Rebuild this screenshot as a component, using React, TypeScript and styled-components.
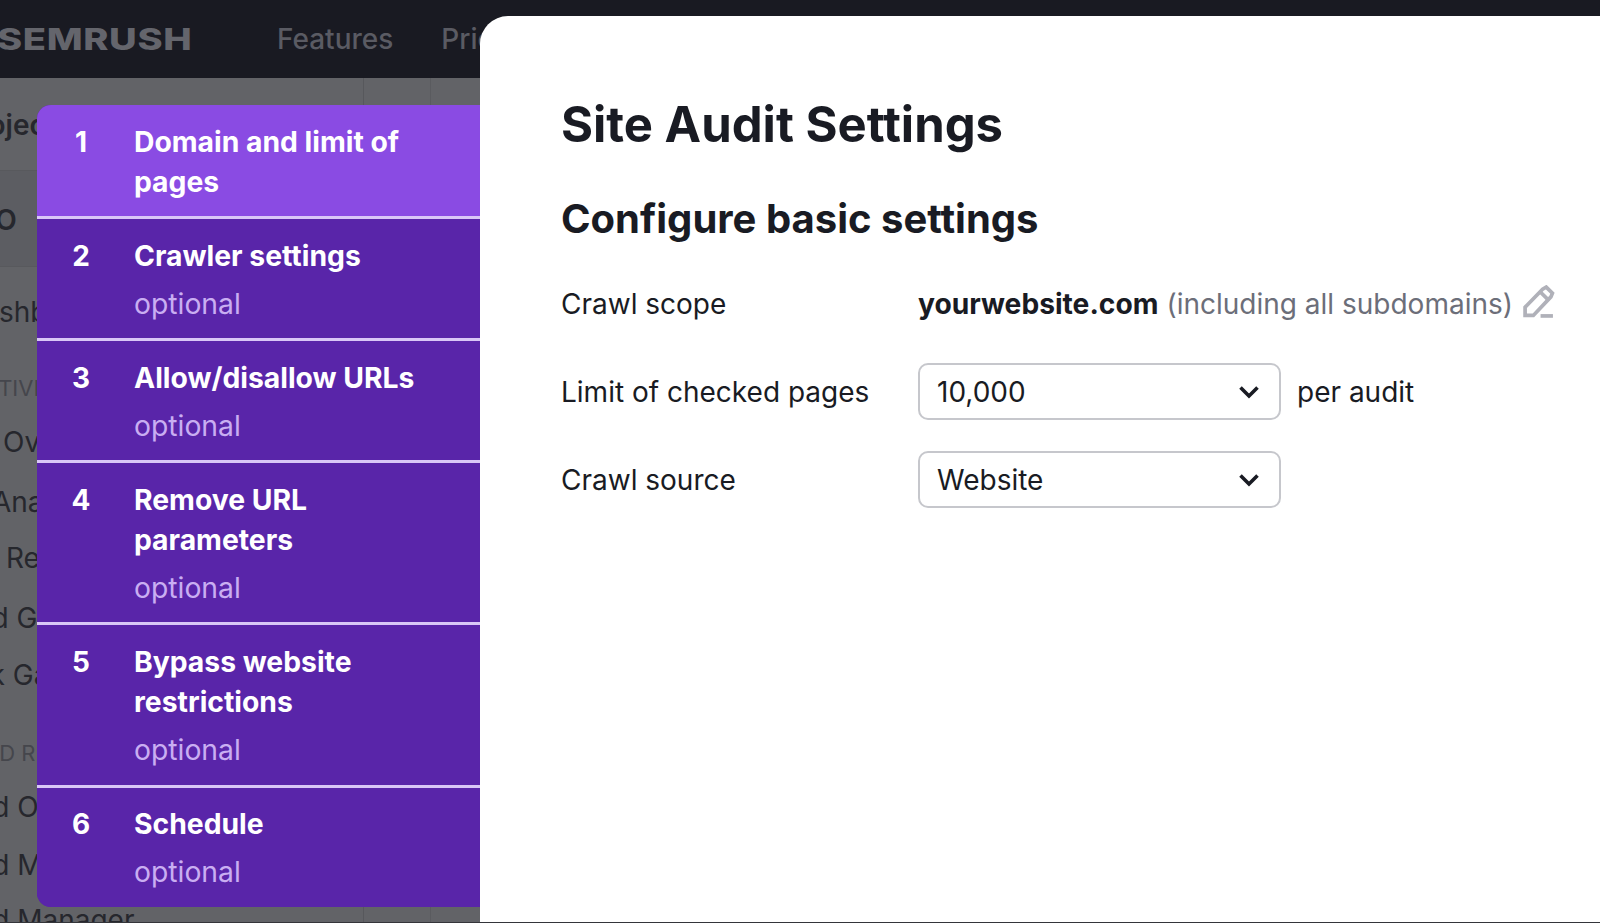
import React from 'react';
import styled, { createGlobalStyle } from 'styled-components';

const GlobalStyle = createGlobalStyle`
    html, body {
        margin: 0;
        padding: 0;
        height: 100%;
        overflow: hidden;
        font-family: Inter, "Liberation Sans", sans-serif;
    }
`;

const Page = styled.div`
    position: relative;
    width: 1600px;
    height: 923px;
    box-sizing: border-box;
    overflow: hidden;
    background: #626367;
    border-bottom: 1px solid #34353a;
    display: flex;
    flex-direction: column;
`;

const TopBar = styled.header`
    height: 78px;
    flex: none;
    background: #191a22;
    display: flex;
    align-items: center;
    gap: 84px;
`;

const Logo = styled.div`
    margin-left: -3px;
    width: 196px;
    font-size: 30px;
    font-weight: 800;
    color: #64656c;
    letter-spacing: 0.5px;
    transform: scaleX(1.27);
    transform-origin: left center;
`;

const NavLinks = styled.nav`
    display: flex;
    gap: 48px;
    font-size: 28px;
    font-weight: 500;
    color: #5a5b63;
`;

const BackBody = styled.div`
    flex: 1;
    display: flex;
    min-height: 0;
`;

const BackSidebar = styled.aside`
    width: 363px;
    flex: none;
    border-right: 1px solid #57585c;
    display: flex;
    flex-direction: column;
    white-space: nowrap;
    overflow: hidden;
`;

const BackColumn = styled.div`
    width: 66px;
    flex: none;
    border-right: 1px solid #5a5b5f;
`;

const BackRow = styled.div<{ $top: number; $indent: number; $kind?: string }>`
    flex: none;
    margin-top: ${({ $top }) => $top}px;
    height: 34px;
    line-height: 34px;
    text-indent: ${({ $indent }) => $indent}px;
    color: ${({ $kind }) => ($kind === 'label' ? '#45464c' : '#26272d')};
    font-size: ${({ $kind }) => ($kind === 'label' ? '22px' : '28px')};
    font-weight: ${({ $kind }) => ($kind === 'strong' ? 600 : 400)};
`;

const BackBand = styled.div<{ $top: number; $indent: number }>`
    flex: none;
    margin-top: ${({ $top }) => $top}px;
    height: 97px;
    box-sizing: border-box;
    padding-top: 3px;
    line-height: 92px;
    background: #5c5d62;
    border-top: 1px solid #58595d;
    border-bottom: 1px solid #58595d;
    text-indent: ${({ $indent }) => $indent}px;
    color: #26272d;
    font-size: 28px;
    font-weight: 600;
`;

const Modal = styled.section`
    position: absolute;
    left: 480px;
    top: 16px;
    right: 0;
    bottom: 0;
    background: #fff;
    border-top-left-radius: 28px;
    padding: 0 0 0 81px;
    color: #191b23;
`;

const Steps = styled.ol`
    position: absolute;
    left: 37px;
    top: 105px;
    width: 443px;
    margin: 0;
    padding: 0;
    list-style: none;
    background: #5925a9;
    border-radius: 14px 0 0 14px;
    overflow: hidden;
`;

const Step = styled.li<{ $active?: boolean; $height: number }>`
    display: flex;
    height: ${({ $height }) => $height}px;
    box-sizing: border-box;
    padding-top: 17px;
    background: ${({ $active }) => ($active ? '#8a4be3' : '#5925a9')};
    border-bottom: 3px solid #d9c7f7;
    color: #fff;

    &:last-child {
        border-bottom: none;
        padding-top: 16px;
    }
`;

const StepNumber = styled.div`
    width: 97px;
    flex: none;
    text-align: center;
    padding-right: 9px;
    box-sizing: border-box;
    font-size: 28px;
    font-weight: 700;
    line-height: 40px;
`;

const StepBody = styled.div`
    flex: 1;
`;

const StepTitle = styled.div`
    font-size: 28.3px;
    font-weight: 700;
    line-height: 40px;
    max-width: 300px;
`;

const StepNote = styled.div`
    font-size: 28.3px;
    line-height: 40px;
    margin-top: 8px;
    color: #c9aef2;
`;

const Title = styled.h1`
    margin: 81px 0 0;
    font-size: 49px;
    line-height: 56px;
    font-weight: 700;
`;

const Subtitle = styled.h2`
    margin: 42px 0 0;
    font-size: 40px;
    line-height: 48px;
    font-weight: 700;
`;

const Form = styled.div`
    margin-top: 32px;
    display: flex;
    flex-direction: column;
    gap: 31px;
`;

const Row = styled.div`
    display: flex;
    align-items: center;
    min-height: 57px;
    font-size: 28px;
`;

const Label = styled.div`
    width: 357px;
    flex: none;
`;

const Domain = styled.strong`
    font-size: 28.2px;
    font-weight: 700;
`;

const Muted = styled.span`
    margin-left: 8px;
    color: #6c6e79;
`;

const EditIcon = styled.svg`
    width: 33px;
    height: 33px;
    margin-left: 9px;
    margin-bottom: 4px;
    color: #b0b1b9;
`;

const Select = styled.div`
    width: 363px;
    height: 57px;
    box-sizing: border-box;
    border: 2px solid #c6c7cc;
    border-radius: 10px;
    padding: 0 18px 0 17px;
    display: flex;
    align-items: center;
    justify-content: space-between;
`;

const Chevron = styled.svg`
    width: 24px;
    height: 24px;
`;

const Suffix = styled.div`
    margin-left: 16px;
`;

const ChevronDown = () => (
    <Chevron viewBox="0 0 24 24" fill="none" stroke="#191b23" strokeWidth="3.6">
        <path d="M3.500 7.500l8.500 8.500 8.500-8.500" />
    </Chevron>
);

const steps = [
    { title: 'Domain and limit of pages', height: 114, active: true },
    { title: 'Crawler settings', note: true, height: 122 },
    { title: 'Allow/disallow URLs', note: true, height: 122 },
    { title: 'Remove URL parameters', note: true, height: 162 },
    { title: 'Bypass website restrictions', note: true, height: 163 },
    { title: 'Schedule', note: true, height: 119 },
];

const backRows = [
    { text: 'Dashboard', top: 28, indent: -37 },
    { text: 'COMPETITIVE', top: 42, indent: -102, kind: 'label' },
    { text: 'Market Overview', top: 20, indent: -97 },
    { text: 'Analytics', top: 26, indent: -8 },
    { text: 'Report', top: 22, indent: 6 },
    { text: 'Keyword Gap', top: 26, indent: -107 },
    { text: 'Backlink Gap', top: 23, indent: -106 },
    { text: 'BRAND RESEARCH', top: 44, indent: -61, kind: 'label' },
    { text: 'Brand Overview', top: 20, indent: -69 },
    { text: 'Brand Monitoring', top: 24, indent: -69 },
    { text: 'Brand Manager', top: 21, indent: -69 },
];

export default function App() {
    return (
        <Page>
            <GlobalStyle />
            <TopBar>
                <Logo>SEMRUSH</Logo>
                <NavLinks>
                    <span>Features</span>
                    <span>Pricing</span>
                </NavLinks>
            </TopBar>
            <BackBody>
                <BackSidebar>
                    <BackRow $top={30} $indent={-40} $kind="strong">Projects</BackRow>
                    <BackBand $top={28} $indent={-40}>SEO</BackBand>
                    {backRows.map((row) => (
                        <BackRow key={row.text} $top={row.top} $indent={row.indent} $kind={row.kind}>
                            {row.text}
                        </BackRow>
                    ))}
                </BackSidebar>
                <BackColumn />
            </BackBody>
            <Steps>
                {steps.map((step, i) => (
                    <Step key={step.title} $active={step.active} $height={step.height}>
                        <StepNumber>{i + 1}</StepNumber>
                        <StepBody>
                            <StepTitle>{step.title}</StepTitle>
                            {step.note && <StepNote>optional</StepNote>}
                        </StepBody>
                    </Step>
                ))}
            </Steps>
            <Modal>
                <Title>Site Audit Settings</Title>
                <Subtitle>Configure basic settings</Subtitle>
                <Form>
                    <Row>
                        <Label>Crawl scope</Label>
                        <Domain>yourwebsite.com</Domain>
                        <Muted>(including all subdomains)</Muted>
                        <EditIcon viewBox="0 0 32 32" fill="none" stroke="currentColor" strokeWidth="3.6">
                            <path d="M3 29.500v-8L20 4l3.500-2 6 6-1.500 3.500L11 29.500z" />
                            <path d="M18 7l7 7" />
                            <path d="M18 30h12" />
                        </EditIcon>
                    </Row>
                    <Row>
                        <Label>Limit of checked pages</Label>
                        <Select>
                            10,000
                            <ChevronDown />
                        </Select>
                        <Suffix>per audit</Suffix>
                    </Row>
                    <Row>
                        <Label>Crawl source</Label>
                        <Select>
                            Website
                            <ChevronDown />
                        </Select>
                    </Row>
                </Form>
            </Modal>
        </Page>
    );
}
